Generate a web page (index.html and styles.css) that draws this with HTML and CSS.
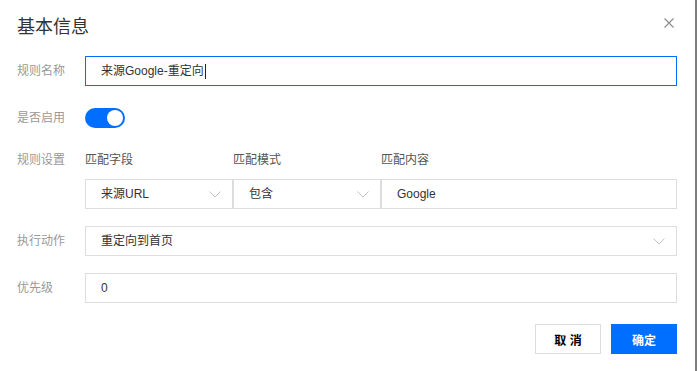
FILE: index.html
```html
<!DOCTYPE html>
<html lang="zh-CN">
<head>
<meta charset="utf-8">
<title>基本信息</title>
<link rel="stylesheet" href="styles.css">
</head>
<body>
<div class="dialog">
  <div class="header">
    <div class="title">基本信息</div>
    <svg class="close" width="10" height="10" viewBox="0 0 10 10"><path d="M0.5 0.5L9.5 9.5M9.5 0.5L0.5 9.5" stroke="#8a8a8a" stroke-width="1.1" fill="none"/></svg>
  </div>

  <div class="row row-name">
    <div class="label">规则名称</div>
    <div class="field input focused"><span class="text">来源Google-重定向</span><span class="caret"></span></div>
  </div>

  <div class="row row-toggle">
    <div class="label">是否启用</div>
    <div class="toggle"><span class="knob"></span></div>
  </div>

  <div class="row row-rules">
    <div class="label">规则设置</div>
    <div class="rules">
      <div class="sub">匹配字段</div>
      <div class="sub">匹配模式</div>
      <div class="sub">匹配内容</div>
      <div class="field select"><span class="text">来源URL</span><svg class="chev" width="12" height="7" viewBox="0 0 12 7"><path d="M0.5 0.5L6 6L11.5 0.5" stroke="#c4c4c4" stroke-width="1" fill="none"/></svg></div>
      <div class="field select"><span class="text">包含</span><svg class="chev" width="12" height="7" viewBox="0 0 12 7"><path d="M0.5 0.5L6 6L11.5 0.5" stroke="#c4c4c4" stroke-width="1" fill="none"/></svg></div>
      <div class="field input"><span class="text">Google</span></div>
    </div>
  </div>

  <div class="row row-action">
    <div class="label">执行动作</div>
    <div class="field select"><span class="text">重定向到首页</span><svg class="chev" width="12" height="7" viewBox="0 0 12 7"><path d="M0.5 0.5L6 6L11.5 0.5" stroke="#c4c4c4" stroke-width="1" fill="none"/></svg></div>
  </div>

  <div class="row row-priority">
    <div class="label">优先级</div>
    <div class="field input"><span class="text">0</span></div>
  </div>

  <div class="footer">
    <button class="btn cancel">取 消</button>
    <button class="btn ok">确定</button>
  </div>
</div>
</body>
</html>
```

FILE: styles.css
```css
html, body {
  margin: 0;
  padding: 0;
  background: #fff;
}
body {
  width: 698px;
  height: 371px;
  overflow: hidden;
  font-family: "Liberation Sans", "Noto Sans CJK SC", sans-serif;
  font-size: 12px;
  color: #333;
}
.dialog {
  box-sizing: border-box;
  width: 697px;
  height: 371px;
  border-right: 2px solid #7d7d7d;
  padding: 12px 18px 0 17px;
}
.header {
  display: flex;
  justify-content: space-between;
  align-items: flex-start;
  height: 27px;
}
.title {
  font-size: 18px;
  line-height: 27px;
  color: #333;
  font-family: "Noto Sans CJK SC", sans-serif;
}
.close {
  margin-top: 6px;
  margin-right: 3px;
}
.row {
  display: flex;
  align-items: center;
}
.label {
  width: 68px;
  flex: none;
  color: #999;
  font-size: 12px;
  line-height: 18px;
}
.row-name { margin-top: 17px; }
.row-toggle { margin-top: 22px; height: 20px; }
.row-rules { margin-top: 23px; align-items: flex-start; }
.row-action { margin-top: 17px; }
.row-priority { margin-top: 17px; }

.field {
  box-sizing: border-box;
  height: 30px;
  border: 1px solid #ddd;
  display: flex;
  align-items: center;
  padding: 0 11px 0 15px;
  flex: 1;
  min-width: 0;
  color: #333;
}
.field.focused {
  border-color: #006eff;
}
.field .text {
  flex: 1;
  line-height: 18px;
}
.field.focused .text {
  flex: none;
}
.caret {
  display: inline-block;
  width: 1px;
  height: 15px;
  background: #222;
  margin-left: 1px;
}
.chev {
  flex: none;
}

.toggle {
  position: relative;
  width: 40px;
  height: 20px;
  border-radius: 10px;
  background: #006eff;
}
.knob {
  position: absolute;
  right: 2px;
  top: 2px;
  width: 16px;
  height: 16px;
  border-radius: 50%;
  background: #fff;
}

.rules {
  flex: 1;
  display: grid;
  grid-template-columns: 148px 148px 1fr;
  row-gap: 10px;
}
.sub {
  line-height: 18px;
  color: #555;
}
.rules .field {
  width: auto;
}

.footer {
  display: flex;
  justify-content: flex-end;
  gap: 10px;
  margin-top: 21px;
}
.btn {
  box-sizing: border-box;
  width: 66px;
  height: 30px;
  font-family: "Liberation Sans", "Noto Sans CJK SC", sans-serif;
  font-size: 12px;
  font-weight: bold;
  border: 1px solid #ddd;
  background: #fff;
  color: #000;
  padding: 0;
}
.btn.ok {
  background: #006eff;
  border-color: #006eff;
  color: #fff;
}
```
